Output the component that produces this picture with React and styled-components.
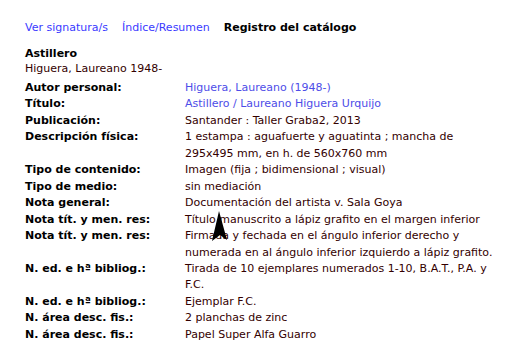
import React from 'react';
import styled, { createGlobalStyle } from 'styled-components';

const Global = createGlobalStyle`
  html, body {
    margin: 0;
    background: #fff;
  }
  body {
    font-family: "DejaVu Sans", Verdana, sans-serif;
    font-size: 11px;
  }
`

const Page = styled.div`
  position: relative;
  width: 509px;
  height: 353px;
  padding: 20px 0 0 25px;
  box-sizing: border-box;
  overflow: hidden;
`

const Tabs = styled.div`
  display: flex;
  gap: 14px;
  line-height: 16px;
  margin-bottom: 10px;
`

const TabLink = styled.a`
  color: #3a3aff;
  text-decoration: none;
  cursor: pointer;
`

const TabCurrent = styled.span`
  color: #000;
  font-weight: bold;
`

const Heading = styled.div`
  line-height: 15px;
  margin-bottom: 4px;
`

const Title = styled.div`
  font-weight: bold;
  color: #000;
`

const Byline = styled.div`
  color: #300;
`

const Record = styled.div`
  display: grid;
  grid-template-columns: 160px 1fr;
  line-height: 16.45px;
`

const Label = styled.div`
  font-weight: bold;
  color: #000;
`

const Value = styled.div`
  color: ${p => (p.$link ? '#4d4de8' : '#300')};
  white-space: nowrap;
`

const Cursor = styled.svg`
  position: absolute;
  left: 209px;
  top: 209px;
`

const rows = [
  { label: 'Autor personal:', lines: ['Higuera, Laureano (1948-)'], link: true },
  { label: 'Título:', lines: ['Astillero / Laureano Higuera Urquijo'], link: true },
  { label: 'Publicación:', lines: ['Santander : Taller Graba2, 2013'] },
  { label: 'Descripción física:', lines: ['1 estampa : aguafuerte y aguatinta ; mancha de', '295x495 mm, en h. de 560x760 mm'] },
  { label: 'Tipo de contenido:', lines: ['Imagen (fija ; bidimensional ; visual)'] },
  { label: 'Tipo de medio:', lines: ['sin mediación'] },
  { label: 'Nota general:', lines: ['Documentación del artista v. Sala Goya'] },
  { label: 'Nota tít. y men. res:', lines: ['Título manuscrito a lápiz grafito en el margen inferior'] },
  { label: 'Nota tít. y men. res:', lines: ['Firmada y fechada en el ángulo inferior derecho y', 'numerada en al ángulo inferior izquierdo a lápiz grafito.'] },
  { label: 'N. ed. e hª bibliog.:', lines: ['Tirada de 10 ejemplares numerados 1-10, B.A.T., P.A. y', 'F.C.'] },
  { label: 'N. ed. e hª bibliog.:', lines: ['Ejemplar F.C.'] },
  { label: 'N. área desc. fis.:', lines: ['2 planchas de zinc'] },
  { label: 'N. área desc. fis.:', lines: ['Papel Super Alfa Guarro'] },
];

export default function App() {
  return (
    <>
      <Global />
      <Page>
        <Tabs>
          <TabLink>Ver signatura/s</TabLink>
          <TabLink>Índice/Resumen</TabLink>
          <TabCurrent>Registro del catálogo</TabCurrent>
        </Tabs>
        <Heading>
          <Title>Astillero</Title>
          <Byline>Higuera, Laureano 1948-</Byline>
        </Heading>
        <Record>
          {rows.map((r, i) => (
            <React.Fragment key={i}>
              <Label>{r.label}</Label>
              <Value $link={r.link}>
                {r.lines.map((l, j) => (
                  <div key={j}>{l}</div>
                ))}
              </Value>
            </React.Fragment>
          ))}
        </Record>
        <Cursor width="22" height="36" viewBox="0 0 22 36">
          <polygon points="10,2 3,32 11,26 18,31" fill="#000" />
        </Cursor>
      </Page>
    </>
  );
}
